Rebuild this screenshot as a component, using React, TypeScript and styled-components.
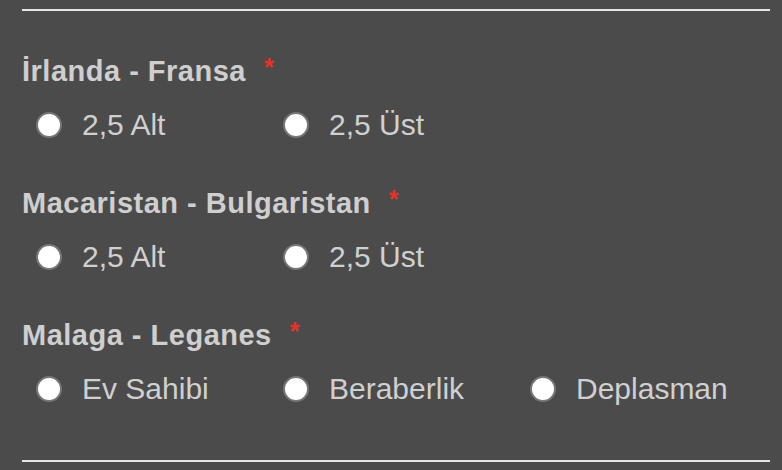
import styled, { createGlobalStyle } from "styled-components";

const GlobalStyle = createGlobalStyle`
  body {
    margin: 0;
    background: #4b4b4b;
    font-family: "Liberation Sans", Arial, sans-serif;
  }
`;

type Match = { name: string; options: string[] };

const matches: Match[] = [
  { name: "İrlanda - Fransa", options: ["2,5 Alt", "2,5 Üst"] },
  { name: "Macaristan - Bulgaristan", options: ["2,5 Alt", "2,5 Üst"] },
  { name: "Malaga - Leganes", options: ["Ev Sahibi", "Beraberlik", "Deplasman"] },
];

export default function App() {
  return (
    <>
      <GlobalStyle />
      <Form>
        {matches.map((m, i) => (
          <Question key={i}>
            <Title>
              {m.name}
              <Required>*</Required>
            </Title>
            <Options>
              {m.options.map((o) => (
                <Option key={o}>
                  <Radio type="radio" name={`q${i}`} />
                  <Label>{o}</Label>
                </Option>
              ))}
            </Options>
          </Question>
        ))}
      </Form>
    </>
  );
}

const Form = styled.div`
  margin: 9px 0 0 22px;
  width: 748px;
  border-top: 2px solid #e6e6e6;
  border-bottom: 2px solid #e6e6e6;
  padding: 44px 0 51px 0;
  display: flex;
  flex-direction: column;
  gap: 42px;
`;

const Question = styled.div`
  display: flex;
  flex-direction: column;
  gap: 18px;
`;

const Title = styled.div`
  font-weight: 700;
  font-size: 29px;
  letter-spacing: 0.5px;
  line-height: 32px;
  color: #cfcfcf;
  display: flex;
  align-items: flex-start;
`;

const Required = styled.span`
  color: #e8312a;
  font-size: 25px;
  font-weight: 700;
  line-height: 22px;
  margin-left: 18px;
  margin-top: 1px;
`;

const Options = styled.div`
  display: grid;
  grid-template-columns: repeat(3, 247px);
  padding-left: 14px;
`;

const Option = styled.label`
  display: flex;
  align-items: center;
  height: 40px;
`;

const Radio = styled.input`
  appearance: none;
  margin: 0;
  width: 26px;
  height: 26px;
  border-radius: 50%;
  background: #ffffff;
  border: 2px solid #767676;
  box-sizing: border-box;
`;

const Label = styled.span`
  margin-left: 20px;
  font-size: 30px;
  color: #d0d0d0;
`;
